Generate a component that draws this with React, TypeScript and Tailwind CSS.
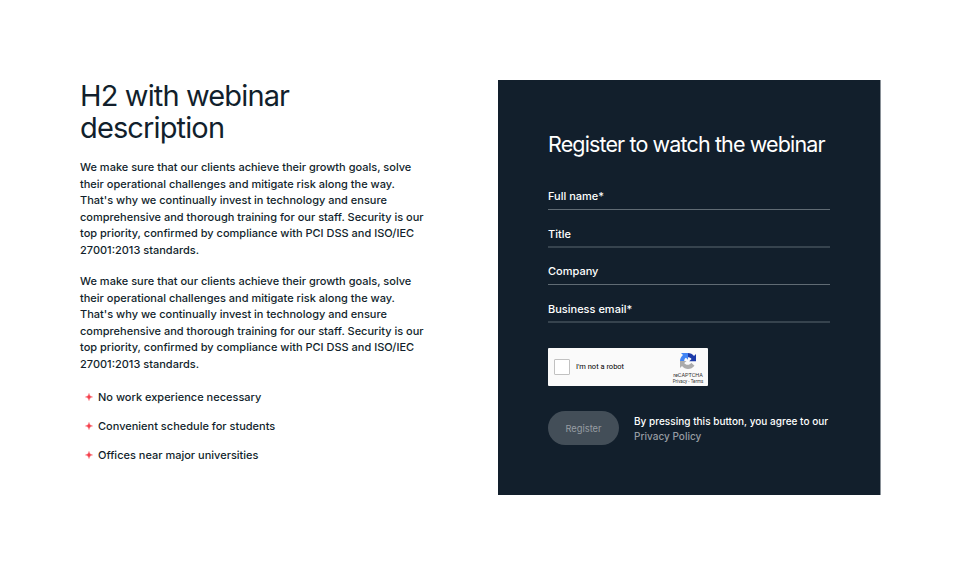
const para = [
  'We make sure that our clients achieve their growth goals, solve',
  'their operational challenges and mitigate risk along the way.',
  "That's why we continually invest in technology and ensure",
  'comprehensive and thorough training for our staff. Security is our',
  'top priority, confirmed by compliance with PCI DSS and ISO/IEC',
  '27001:2013 standards.',
];

const fields = [
  { label: 'Full name*', line: 'mt-[5px] h-px bg-[#606b74]', row: 'h-[37px]' },
  { label: 'Title', line: 'mt-1 h-0.5 bg-[#36434e]', row: 'h-[38px]' },
  { label: 'Company', line: 'mt-[5px] h-px bg-[#606b74]', row: 'h-[37px]' },
  { label: 'Business email*', line: 'mt-1 h-0.5 bg-[#36434e]', row: 'h-[38px]' },
];

function Paragraph() {
  return (
    <p className="text-[11px] leading-[16.5px] font-medium whitespace-nowrap">
      {para.map((l) => (
        <span key={l} className="block">{l}</span>
      ))}
    </p>
  );
}

function Spark() {
  return (
    <svg className="size-2" viewBox="0 0 8 8">
      <path d="M4 .3Q4.300 3.700 7.700 4Q4.300 4.300 4 7.700Q3.700 4.300 .3 4Q3.700 3.700 4 .3Z" fill="#f5404c" stroke="#f5404c" strokeWidth=".3" />
    </svg>
  );
}

function RecaptchaLogo() {
  return (
    <svg className="size-4" viewBox="0 0 64 64">
      <path d="M31 0C42 0 50 4 56 12L64 4V33H37L46 24C43 19 38 17 31 17Z" fill="#1c3aa9" />
      <path d="M4 0H32V27L24 19C19 22 17 26 17 32H0C0 23 5 14 12 8Z" fill="#4285f4" />
      <path d="M0 32V60L8 52C14 60 23 64 32 64C43 64 51 59 58 51L45 39C41 45 37 47 31 47C25 47 20 45 17 40L26 32Z" fill="#ababab" />
    </svg>
  );
}

export default function App() {
  return (
    <main className="flex h-[570px] w-[960px] bg-white pt-20 pl-20 font-['Inter','Liberation_Sans',sans-serif] text-[#121f2c]">
      <section className="w-[418px]">
        <h2 className="text-[29px] leading-8 tracking-[-0.87px] whitespace-nowrap">H2 with webinar<br />description</h2>
        <div className="mt-[15px] flex flex-col gap-[15px]">
          <Paragraph />
          <Paragraph />
        </div>
        <ul className="mt-[17px] flex flex-col gap-[12.5px] pl-[5px]">
          {['No work experience necessary', 'Convenient schedule for students', 'Offices near major universities'].map((t) => (
            <li key={t} className="flex items-center gap-[5px] text-[11px] leading-[16.5px] font-medium"><Spark />{t}</li>
          ))}
        </ul>
      </section>
      <section className="h-[415px] w-[383px] border-r border-[#8a9198] bg-[#121f2c] pt-[50px] pl-[50px] text-white">
        <h3 className="text-[21.5px] leading-7 tracking-[-0.87px] whitespace-nowrap">Register to watch the webinar</h3>
        <form className="mt-[15px] w-[282.4px]">
          {fields.map((f) => (
            <label key={f.label} className={`flex flex-col justify-end text-[11px] font-medium ${f.row}`}>
              <span className="leading-4">{f.label}</span>
              <span className={f.line} />
            </label>
          ))}
          <div className="mt-[25px] flex h-[38px] w-[160px] items-center rounded-[1px] bg-[#fafafa] pl-[6px] text-black">
            <span className="size-[16px] rounded-[1px] border border-[#c1c1c1] bg-white" />
            <span className="ml-[6px] w-[94px] font-['Roboto','Liberation_Sans',sans-serif] text-[7.5px] leading-[10px] whitespace-nowrap">I'm not a robot</span>
            <span className="flex w-9 flex-col items-center pt-[2px] font-['Roboto','Liberation_Sans',sans-serif] whitespace-nowrap text-[#333]">
              <RecaptchaLogo />
              <span className="mt-[3px] text-[5.5px] leading-[7px]">reCAPTCHA</span>
              <span className="text-[4.5px] leading-[5px]">Privacy - Terms</span>
            </span>
          </div>
          <div className="mt-[25px] flex">
            <button type="button" className="h-[34px] w-[71px] shrink-0 rounded-full bg-[#434e58] pt-[2px] text-[9.3px] text-[#979da3]">Register</button>
            <p className="ml-[15px] pt-[3px] text-[10px] leading-[15px] font-medium tracking-[0.02px] whitespace-nowrap">
              By pressing this button, you agree to our<br />
              <a className="text-[#969ca2]">Privacy Policy</a>
            </p>
          </div>
        </form>
      </section>
    </main>
  );
}
